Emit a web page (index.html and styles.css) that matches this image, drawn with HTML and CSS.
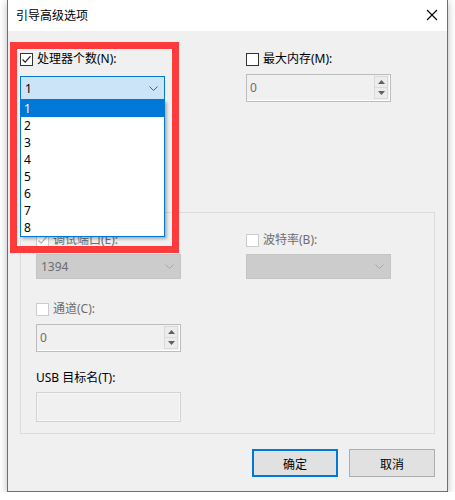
FILE: index.html
```html
<!DOCTYPE html>
<html lang="zh-CN">
<head>
<meta charset="utf-8">
<title>引导高级选项</title>
<link rel="stylesheet" href="styles.css">
</head>
<body>
<div class="window">
  <div class="titlebar">
    <span class="title">引导高级选项</span>
    <svg class="close" width="12" height="12" viewBox="0 0 12 12"><path d="M1 1 L11 11 M11 1 L1 11" stroke="#000" stroke-width="1.1" fill="none"/></svg>
  </div>
  <div class="client">
    <div class="row row-top">
      <div class="col">
        <div class="check">
          <span class="box"><svg width="11" height="11" viewBox="0 0 11 11"><path d="M1.5 5.5 L4.2 8.2 L9.5 2.2" stroke="#222" stroke-width="1.2" fill="none"/></svg></span>
          <span>处理器个数(N):</span>
        </div>
        <div class="combo-wrap">
          <div class="combo active">
            <span>1</span>
            <svg class="chev" width="9" height="5" viewBox="0 0 9 5"><path d="M0.5 0.5 L4.5 4.5 L8.5 0.5" stroke="#5a5a5a" stroke-width="1" fill="none"/></svg>
          </div>
          <ul class="droplist">
            <li class="sel">1</li>
            <li>2</li>
            <li>3</li>
            <li>4</li>
            <li>5</li>
            <li>6</li>
            <li>7</li>
            <li>8</li>
          </ul>
        </div>
      </div>
      <div class="col">
        <div class="check">
          <span class="box"></span>
          <span>最大内存(M):</span>
        </div>
        <div class="spin">
          <span class="val">0</span>
          <div class="spin-btns">
            <span class="sbtn"><svg width="7" height="4" viewBox="0 0 7 4"><path d="M0 4 L3.5 0 L7 4 Z" fill="#606060"/></svg></span>
            <span class="sbtn"><svg width="7" height="4" viewBox="0 0 7 4"><path d="M0 0 L3.5 4 L7 0 Z" fill="#606060"/></svg></span>
          </div>
        </div>
      </div>
    </div>

    <div class="group">
      <div class="row row-group">
        <div class="col">
          <div class="check disabled">
            <span class="box"><svg width="11" height="11" viewBox="0 0 11 11"><path d="M1.5 5.5 L4.2 8.2 L9.5 2.2" stroke="#b0b0b0" stroke-width="1.2" fill="none"/></svg></span>
            <span>调试端口(E):</span>
          </div>
          <div class="combo dis">
            <span>1394</span>
            <svg class="chev" width="9" height="5" viewBox="0 0 9 5"><path d="M0.5 0.5 L4.5 4.5 L8.5 0.5" stroke="#a8a8a8" stroke-width="1" fill="none"/></svg>
          </div>
        </div>
        <div class="col">
          <div class="check disabled">
            <span class="box"></span>
            <span>波特率(B):</span>
          </div>
          <div class="combo dis">
            <span></span>
            <svg class="chev" width="9" height="5" viewBox="0 0 9 5"><path d="M0.5 0.5 L4.5 4.5 L8.5 0.5" stroke="#a8a8a8" stroke-width="1" fill="none"/></svg>
          </div>
        </div>
      </div>
      <div class="col col-channel">
        <div class="check disabled">
          <span class="box"></span>
          <span>通道(C):</span>
        </div>
        <div class="spin">
          <span class="val">0</span>
          <div class="spin-btns">
            <span class="sbtn"><svg width="7" height="4" viewBox="0 0 7 4"><path d="M0 4 L3.5 0 L7 4 Z" fill="#606060"/></svg></span>
            <span class="sbtn"><svg width="7" height="4" viewBox="0 0 7 4"><path d="M0 0 L3.5 4 L7 0 Z" fill="#606060"/></svg></span>
          </div>
        </div>
      </div>
      <div class="col col-usb">
        <div class="plain-label">USB 目标名(T):</div>
        <div class="textbox"></div>
      </div>
    </div>

    <div class="buttons">
      <div class="btn default">确定</div>
      <div class="btn">取消</div>
    </div>
  </div>
  <div class="highlight"></div>
</div>
</body>
</html>
```

FILE: styles.css
```css
* { box-sizing: border-box; }

html, body {
  margin: 0;
  padding: 0;
  background: #ffffff;
}

body {
  font-family: "Noto Sans", "Noto Sans CJK SC", sans-serif;
  font-size: 12px;
  color: #000;
}

.window {
  position: relative;
  margin-left: 7px;
  width: 441px;
  height: 492px;
  border: 1px solid #6f6f6f;
  border-top: none;
  background: #f0f0f0;
  box-shadow: 0 2px 8px rgba(0, 0, 0, 0.28);
}

.titlebar {
  height: 31px;
  background: #ffffff;
  display: flex;
  align-items: center;
  justify-content: space-between;
  padding: 0 9px 1px 8px;
}

.title {
  font-family: "Noto Sans CJK SC", sans-serif;
  font-size: 12px;
  line-height: 16px;
}

.close { display: block; }

.client {
  height: 460px;
  padding: 20px 12px 0 12px;
}

.row {
  display: flex;
  align-items: flex-start;
}

.row-top { gap: 81px; }

.col {
  width: 145px;
  display: flex;
  flex-direction: column;
}

.check {
  height: 16px;
  display: flex;
  align-items: center;
  gap: 4px;
  line-height: 16px;
  white-space: nowrap;
}

.box {
  width: 13px;
  height: 13px;
  border: 1px solid #333333;
  background: #ffffff;
  display: flex;
  align-items: center;
  justify-content: center;
  flex: none;
}

.box svg { display: block; }

.check.disabled { color: #6d6d6d; }
.check.disabled .box { border-color: #cccccc; }

.combo-wrap {
  position: relative;
  margin-top: 9px;
}

.combo {
  display: flex;
  align-items: center;
  justify-content: space-between;
  padding: 0 6px 0 4px;
  border: 1px solid #cccccc;
}

.combo.active {
  height: 24px;
  background: #cce4f7;
  border-color: #0078d7;
}

.combo.dis {
  margin-top: 6px;
  height: 25px;
  background: #cccccc;
  border-color: #c4c4c4;
  color: #6d6d6d;
}

.chev { display: block; }

.droplist {
  position: absolute;
  top: 100%;
  left: 0;
  width: 145px;
  margin: 0;
  padding: 0;
  list-style: none;
  background: #ffffff;
  border: 1px solid #0078d7;
  border-top: none;
  box-shadow: 2px 2px 3px rgba(0, 0, 0, 0.28);
  z-index: 2;
}

.droplist li {
  height: 17px;
  line-height: 17px;
  padding-left: 3px;
}

.droplist li.sel {
  background: #0078d7;
  color: #ffffff;
}

.spin {
  margin-top: 7px;
  height: 28px;
  border: 1px solid #bcbcbc;
  box-shadow: inset -1px -1px 0 #ffffff;
  display: flex;
  align-items: stretch;
  justify-content: space-between;
  padding: 1px 2px 2px 3px;
  color: #6d6d6d;
}

.spin .val {
  line-height: 23px;
}

.spin-btns {
  width: 14px;
  display: flex;
  flex-direction: column;
}

.sbtn {
  flex: 1;
  display: flex;
  align-items: center;
  justify-content: center;
  background: #ececec;
  border: 1px solid #dadada;
}

.sbtn + .sbtn { border-top: none; }

.sbtn svg { display: block; }

.group {
  margin-top: 110px;
  height: 222px;
  border: 1px solid #dcdcdc;
  padding: 19px 0 0 15px;
}

.row-group { gap: 65px; }

.col-channel { margin-top: 22px; }

.col-usb { margin-top: 18px; }

.plain-label {
  height: 16px;
  line-height: 16px;
}

.textbox {
  margin-top: 6px;
  height: 30px;
  border: 1px solid #d2d2d2;
  box-shadow: inset 0 0 0 1px #f7f7f7;
}

.buttons {
  margin-top: 15px;
  display: flex;
  justify-content: flex-end;
  gap: 11px;
}

.btn {
  width: 86px;
  height: 28px;
  display: flex;
  align-items: center;
  justify-content: center;
  background: #e1e1e1;
  border: 1px solid #adadad;
  font-family: "Noto Sans CJK SC", sans-serif;
}

.btn.default {
  border: 2px solid #0078d7;
}

.highlight {
  position: absolute;
  left: 2px;
  top: 42px;
  width: 169px;
  height: 211px;
  border: 7px solid #fe3b3b;
  z-index: 3;
}
```
